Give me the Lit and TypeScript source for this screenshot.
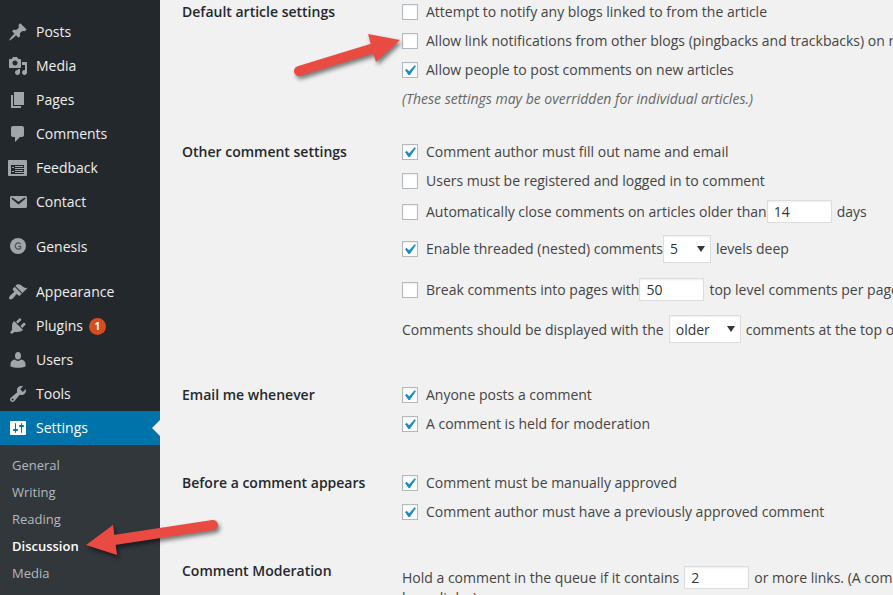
import { LitElement, html, svg, css, nothing, TemplateResult } from "lit";
import { customElement } from "lit/decorators.js";
import { classMap } from "lit/directives/class-map.js";

const icons: Record<string, TemplateResult> = {
  posts: svg`<path d="M10.44 3.02l1.82-1.82 6.36 6.35-1.83 1.82c-1.05-.68-2.48-.57-3.41.36l-.75.75c-.92.93-1.04 2.35-.35 3.41l-1.83 1.82-2.41-2.41-2.8 2.79c-.42.42-3.38 2.71-3.8 2.29s1.86-3.39 2.28-3.81l2.79-2.79L4.1 9.36l1.83-1.82c1.05.69 2.48.57 3.4-.36l.75-.75c.93-.92 1.05-2.35.36-3.41z"/>`,
  media: svg`<path fill-rule="evenodd" d="M13 11V4c0-.55-.45-1-1-1h-1.67L9 1H5L3.67 3H2c-.55 0-1 .45-1 1v7c0 .55.45 1 1 1h10c.55 0 1-.45 1-1zM7 4.5c1.38 0 2.5 1.12 2.5 2.5S8.38 9.5 7 9.5 4.5 8.38 4.5 7 5.62 4.5 7 4.5z"/><path d="M14 6h5v10.5c0 1.38-1.12 2.5-2.5 2.5S14 17.88 14 16.5s1.12-2.5 2.5-2.5c.17 0 .34.02.5.05V9h-3V6zm-4 8.05V13h2v3.5c0 1.38-1.12 2.5-2.5 2.5S7 17.88 7 16.5 8.12 14 9.5 14c.17 0 .34.02.5.05z"/>`,
  pages: svg`<path d="M6 15V2h10v13H6zm-1 1h8v2H3V5h2v11z"/>`,
  comments: svg`<path d="M5 2h9c1.1 0 2 .9 2 2v7c0 1.1-.9 2-2 2h-2l-5 5v-5H5c-1.1 0-2-.9-2-2V4c0-1.1.9-2 2-2z"/>`,
  feedback: svg`<path fill-rule="evenodd" d="M1 2h17c.55 0 1 .45 1 1v14c0 .55-.45 1-1 1H1c-.55 0-1-.45-1-1V3c0-.55.45-1 1-1zM3 7v9h13v-1H7v-1h9v-3H7v-1h9V7zM7 8h8v1H7zM4 9h2v1H4zM7 12h8v1H7zM4 13h2v1H4z"/>`,
  contact: svg`<path d="M3.87 4h13.25C18.37 4 19 4.59 19 5.79v8.42c0 1.19-.63 1.79-1.88 1.79H3.87c-1.25 0-1.88-.6-1.88-1.79V5.79c0-1.2.63-1.79 1.88-1.79zm6.62 8.6l6.74-5.53c.24-.2.43-.66.13-1.07-.29-.41-.82-.42-1.17-.17l-5.7 3.86L4.8 5.83c-.35-.25-.88-.24-1.17.17-.3.41-.11.87.13 1.07z"/>`,
  genesis: svg`<circle cx="10" cy="9" r="8"/><path fill="none" stroke="#4c5156" stroke-width="1.2" d="M12.6 6.9A3.1 3.1 0 1 0 12.7 11V9.4H10.4"/>`,
  appearance: svg`<path d="M14.48 11.06L7.41 3.99l1.5-1.5c.5-.56 2.3-.47 3.51.32 1.21.8 1.43 1.28 2.91 2.1 1.18.64 2.45 1.26 4.45.85zm-.71.71L6.7 4.7 4.93 6.47c-.39.39-.39 1.02 0 1.41l1.06 1.06c.39.39.39 1.03 0 1.42-.6.6-1.43 1.11-2.21 1.69-.35.26-.7.53-1.01.84C1.43 14.23.4 16.08 1.4 17.07c.99 1 2.84-.03 4.18-1.36.31-.31.58-.66.85-1.02.57-.78 1.08-1.61 1.69-2.21.39-.39 1.02-.39 1.41 0l1.06 1.06c.39.39 1.02.39 1.41 0z"/>`,
  plugins: svg`<path d="M13.11 4.36L9.87 7.6 8 5.73l3.24-3.24c.35-.34 1.05-.2 1.56.32.52.51.66 1.21.31 1.55zm-8 1.77l.91-1.12 9.01 9.01-1.19.84c-.71.71-2.63 1.16-3.82 1.16H6.14L4.9 17.26c-.59.59-1.54.59-2.12 0-.59-.58-.59-1.53 0-2.12l1.24-1.24v-3.88c0-1.13.4-3.19 1.09-3.89zm7.26 3.97l3.24-3.24c.34-.35 1.04-.21 1.55.31.52.51.66 1.21.31 1.55l-3.24 3.25z"/>`,
  users: svg`<ellipse cx="10" cy="5.8" rx="3" ry="3.8"/><path d="M7 9.6c.8.9 1.8 1.3 3 1.3s2.2-.4 3-1.3c2.700.2 4.500 2 4.500 4.400v2.400c-2 .9-4.600 1.300-7.500 1.300s-5.500-.4-7.500-1.300V14c0-2.400 1.800-4.200 4.500-4.400z"/>`,
  tools: svg`<path d="M16.68 9.77c-1.34 1.34-3.3 1.67-4.95.99l-5.41 6.52c-.99.99-2.59.99-3.58 0s-.99-2.59 0-3.57l6.52-5.42c-.68-1.65-.35-3.61.99-4.95 1.28-1.28 3.12-1.62 4.72-1.06l-2.89 2.89 2.82 2.82 2.86-2.87c.53 1.58.18 3.39-1.08 4.65zM3.81 16.21c.4.39 1.04.39 1.43 0 .4-.4.4-1.04 0-1.43-.39-.4-1.03-.4-1.43 0-.39.39-.39 1.03 0 1.43z"/>`,
  settings: svg`<path d="M18 16V4c0-.55-.45-1-1-1H3c-.55 0-1 .45-1 1v12c0 .55.45 1 1 1h14c.55 0 1-.45 1-1zM8 11h1c.55 0 1 .45 1 1s-.45 1-1 1H8v1.5c0 .28-.22.5-.5.5s-.5-.22-.5-.5V13H6c-.55 0-1-.45-1-1s.45-1 1-1h1V5.500c0-.28.22-.5.5-.5s.5.22.5.5V11zm5-2h-1c-.55 0-1-.45-1-1s.45-1 1-1h1V5.500c0-.28.22-.5.5-.5s.5.22.5.5V7h1c.55 0 1 .45 1 1s-.45 1-1 1h-1v5.500c0 .28-.22.5-.5.5s-.5-.22-.5-.5V9z"/>`,
};

interface MenuItem {
  icon: string;
  label: string;
  count?: number;
  current?: boolean;
}

const menuGroups: MenuItem[][] = [
  [
    { icon: "posts", label: "Posts" },
    { icon: "media", label: "Media" },
    { icon: "pages", label: "Pages" },
    { icon: "comments", label: "Comments" },
    { icon: "feedback", label: "Feedback" },
    { icon: "contact", label: "Contact" },
  ],
  [{ icon: "genesis", label: "Genesis" }],
  [
    { icon: "appearance", label: "Appearance" },
    { icon: "plugins", label: "Plugins", count: 1 },
    { icon: "users", label: "Users" },
    { icon: "tools", label: "Tools" },
    { icon: "settings", label: "Settings", current: true },
  ],
];

const settingsPages = ["General", "Writing", "Reading", "Discussion", "Media"];

@customElement("admin-menu")
export class AdminMenu extends LitElement {
  static styles = css`
    :host {
      display: block;
      box-sizing: border-box;
      padding-top: 15px;
      background: #23282d;
      font-size: 14px;
    }
    ul {
      list-style: none;
      margin: 0;
      padding: 0;
    }
    .group + .group {
      margin-top: 11px;
    }
    a {
      text-decoration: none;
    }
    .item {
      display: flex;
      align-items: center;
      height: 34px;
      padding-left: 8px;
      gap: 8px;
      color: #eee;
      position: relative;
    }
    .icon {
      width: 20px;
      height: 20px;
      fill: #a0a5aa;
      flex: none;
    }
    .label {
      padding-bottom: 2px;
    }
    .current {
      background: #0073aa;
      color: #fff;
    }
    .current .icon {
      fill: #fff;
    }
    .current::after {
      content: "";
      position: absolute;
      right: 0;
      top: 9px;
      border: 8px solid transparent;
      border-left: 0;
      border-right-color: #f1f1f1;
    }
    .count {
      min-width: 17px;
      margin-left: -2px;
      border-radius: 9px;
      background: #d54e21;
      color: #fff;
      font-size: 10px;
      font-weight: 700;
      line-height: 17px;
      text-align: center;
    }
    .sub {
      padding: 7px 0 8px;
      background: #32373c;
      min-height: calc(100vh - 460px);
    }
    .subitem {
      display: block;
      padding-left: 12px;
      font-size: 13px;
      line-height: 27px;
      color: #b4b9be;
    }
    .active {
      color: #fff;
      font-weight: 600;
    }
  `;

  render() {
    return html`<nav aria-label="Main menu">
      ${menuGroups.map(
        (group) => html`<ul class="group">
          ${group.map(
            (item) => html`<li>
              <a href="#" class=${classMap({ item: true, current: !!item.current })}>
                <svg class="icon" viewBox="0 0 20 20" aria-hidden="true">${icons[item.icon]}</svg>
                <span class="label">${item.label}</span>
                ${item.count ? html`<span class="count">${item.count}</span>` : nothing}
              </a>
            </li>`
          )}
        </ul>`
      )}
      <ul class="sub">
        ${settingsPages.map(
          (page) => html`<li>
            <a href="#" class=${classMap({ subitem: true, active: page === "Discussion" })}>${page}</a>
          </li>`
        )}
      </ul>
    </nav>`;
  }
}

@customElement("discussion-form")
export class DiscussionForm extends LitElement {
  static styles = css`
    :host {
      display: block;
      overflow: hidden;
      padding-left: 22px;
      color: #444;
      font-size: 14px;
    }
    form {
      display: flex;
      flex-direction: column;
      gap: 30px;
      margin-top: -3px;
    }
    fieldset {
      display: grid;
      grid-template-columns: 220px 1fr;
      border: 0;
      margin: 0;
      padding: 0;
      min-width: 0;
    }
    .title {
      color: #23282d;
      font-weight: 600;
      line-height: 29px;
    }
    .line {
      display: flex;
      align-items: center;
      height: 29px;
      white-space: nowrap;
    }
    .medium {
      height: 33px;
    }
    .tall {
      height: 41px;
    }
    .last {
      height: 38px;
      margin-bottom: 2px;
    }
    .check {
      display: flex;
      align-items: center;
      gap: 8px;
    }
    .note {
      margin: 6px 0 0;
      color: #666;
      font-style: italic;
      line-height: 17px;
    }
    .after {
      margin-left: 5px;
    }
    .before {
      margin-right: 5px;
    }
    input,
    select {
      box-sizing: border-box;
      margin: 0;
      border: 1px solid #ddd;
      border-radius: 0;
      background: #fff;
      box-shadow: inset 0 1px 2px rgba(0, 0, 0, 0.07);
      color: #32373c;
      font: inherit;
      appearance: none;
    }
    .box {
      display: grid;
      position: relative;
    }
    .box input {
      width: 16px;
      height: 16px;
      border-color: #b4b9be;
    }
    .tick {
      display: none;
      position: absolute;
      left: -3px;
      top: -2px;
      width: 21px;
      height: 21px;
      fill: #1e8cbe;
      pointer-events: none;
    }
    input:checked + .tick {
      display: block;
    }
    .number {
      width: 65px;
      height: 23px;
      padding: 0 6px;
      appearance: textfield;
    }
    .number::-webkit-inner-spin-button {
      display: none;
    }
    .choice {
      position: relative;
      display: grid;
    }
    .choice::after {
      content: "";
      position: absolute;
      right: 6px;
      top: 11px;
      border: 4px solid transparent;
      border-top: 6px solid #32373c;
      border-bottom: 0;
      pointer-events: none;
    }
    select {
      height: 28px;
      width: 48px;
      padding: 0 6px;
    }
    .wide {
      width: 72px;
    }
    .queue {
      height: 23px;
      margin-top: 10px;
    }
    .second {
      line-height: 18px;
    }
  `;

  private check(id: string, text: string, checked = false) {
    return html`<label class="check" for=${id}>
      <span class="box">
        <input type="checkbox" id=${id} ?checked=${checked} />
        <svg class="tick" viewBox="0 0 20 20" aria-hidden="true">
          <path d="M14.83 4.89l1.34.94-5.81 8.38H9.02L5.78 9.67l1.34-1.25 2.57 2.4z" />
        </svg>
      </span>
      <span>${text}</span>
    </label>`;
  }

  private group(title: string, body: TemplateResult) {
    return html`<fieldset aria-label=${title}>
      <div class="title">${title}</div>
      <div>${body}</div>
    </fieldset>`;
  }

  render() {
    return html`<form>
      ${this.group(
        "Default article settings",
        html`<div class="line">${this.check("notify", "Attempt to notify any blogs linked to from the article")}</div>
          <div class="line">
            ${this.check("pings", "Allow link notifications from other blogs (pingbacks and trackbacks) on new articles")}
          </div>
          <div class="line">${this.check("allow", "Allow people to post comments on new articles", true)}</div>
          <p class="note">(These settings may be overridden for individual articles.)</p>`
      )}
      ${this.group(
        "Other comment settings",
        html`<div class="line">${this.check("fill", "Comment author must fill out name and email", true)}</div>
          <div class="line">${this.check("registered", "Users must be registered and logged in to comment")}</div>
          <div class="line medium">
            ${this.check("close", "Automatically close comments on articles older than")}
            <input class="number" type="number" id="days" value="14" />
            <label class="after" for="days">days</label>
          </div>
          <div class="line tall">
            ${this.check("threaded", "Enable threaded (nested) comments", true)}
            <span class="choice"><select id="depth"><option>5</option></select></span>
            <label class="after" for="depth">levels deep</label>
          </div>
          <div class="line tall">
            ${this.check("paged", "Break comments into pages with")}
            <input class="number" type="number" id="perpage" value="50" />
            <label class="after" for="perpage">top level comments per page and the last page displayed by default</label>
          </div>
          <div class="line last">
            <label class="before" for="order">Comments should be displayed with the</label>
            <span class="choice"><select id="order" class="wide"><option>older</option></select></span>
            <span class="after">comments at the top of each page</span>
          </div>`
      )}
      ${this.group(
        "Email me whenever",
        html`<div class="line">${this.check("anyone", "Anyone posts a comment", true)}</div>
          <div class="line">${this.check("held", "A comment is held for moderation", true)}</div>`
      )}
      ${this.group(
        "Before a comment appears",
        html`<div class="line">${this.check("manual", "Comment must be manually approved", true)}</div>
          <div class="line">
            ${this.check("previous", "Comment author must have a previously approved comment", true)}
          </div>`
      )}
      ${this.group(
        "Comment Moderation",
        html`<div class="line queue">
            <label class="before" for="links">Hold a comment in the queue if it contains</label>
            <input class="number" type="number" id="links" value="2" />
            <span class="after">or more links. (A common characteristic of comment spam is a large number of</span>
          </div>
          <div class="second">hyperlinks.)</div>`
      )}
    </form>`;
  }
}

@customElement("app-root")
export class AppRoot extends LitElement {
  static styles = css`
    :host {
      display: grid;
      grid-template-columns: 160px minmax(0, 1fr);
      position: relative;
      height: 100vh;
      overflow: hidden;
      background: #f1f1f1;
      font-family: "Open Sans", sans-serif;
    }
    .pointer {
      position: absolute;
      overflow: visible;
      fill: #e94b43;
      stroke: #e94b43;
      filter: drop-shadow(2px 3px 2px rgba(0, 0, 0, 0.5));
      pointer-events: none;
    }
    .to-option {
      left: 290px;
      top: 30px;
      width: 112px;
      height: 50px;
    }
    .to-page {
      left: 86px;
      top: 516px;
      width: 134px;
      height: 40px;
    }
  `;

  render() {
    return html`
      <admin-menu></admin-menu>
      <discussion-form></discussion-form>
      <svg class="pointer to-option" viewBox="0 0 112 50" aria-hidden="true">
        <path d="M9 41L84 18" stroke-width="10" stroke-linecap="round" />
        <path d="M110 10L78 4L86 32Z" stroke="none" />
      </svg>
      <svg class="pointer to-page" viewBox="0 0 134 40" aria-hidden="true">
        <path d="M127 9L28 24" stroke-width="10" stroke-linecap="round" />
        <path d="M0 29L27 9L31 39Z" stroke="none" />
      </svg>
    `;
  }
}
